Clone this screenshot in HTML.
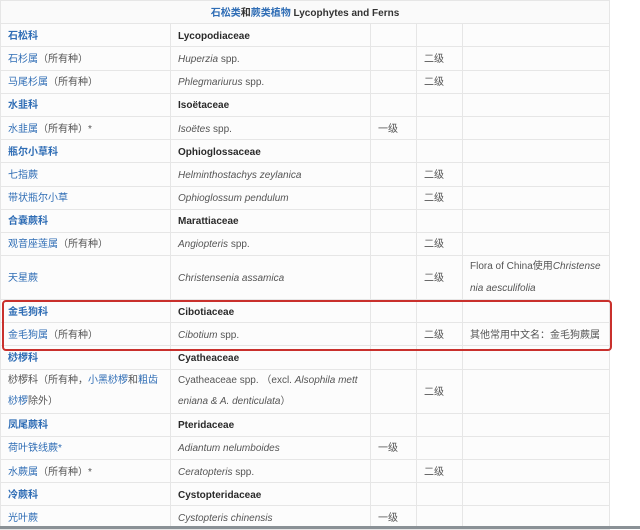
<!DOCTYPE html>
<html><head><meta charset="utf-8"><style>
body{margin:0;width:640px;height:529px;overflow:hidden;background:#fff;font-family:"Liberation Sans","Noto Sans CJK SC",sans-serif;font-size:10px;color:#333;position:relative}
table{position:absolute;left:0;top:0;border-collapse:collapse;width:609px;table-layout:fixed}
td{border:1px solid #e6e6e6;padding:3px 7px 0;height:19.2px;line-height:14px;vertical-align:middle;white-space:nowrap;overflow:hidden;background:#fcfcfc}
td.h{text-align:center;font-weight:bold;background:#fafafa}
.b{color:#2f6db5}.f{font-weight:bold;color:#2a2a2a}
.f.b{color:#2f6db5}
i{color:#555}
.g{color:#555}
.w{white-space:normal;line-height:21.5px;padding-top:0}
.box{position:absolute;left:2px;top:300px;width:606px;height:47px;border:2px solid #c9302c;border-radius:4px}
.bot{position:absolute;left:0;top:526px;width:640px;height:3px;background:#8a9196}
</style></head><body>
<table>
<colgroup><col style="width:170px"><col style="width:200px"><col style="width:46px"><col style="width:46px"><col style="width:147px"></colgroup>
<tr><td class="h" colspan="5"><span class="b">石松类</span>和<span class="b">蕨类植物</span> Lycophytes and Ferns</td></tr>
<tr><td class="f b">石松科</td><td class="f">Lycopodiaceae</td><td></td><td></td><td></td></tr>
<tr><td><span class="b">石杉属</span><span class="g">（所有种）</span></td><td><i>Huperzia</i> <span class="g">spp.</span></td><td></td><td class="g">二级</td><td></td></tr>
<tr><td><span class="b">马尾杉属</span><span class="g">（所有种）</span></td><td><i>Phlegmariurus</i> <span class="g">spp.</span></td><td></td><td class="g">二级</td><td></td></tr>
<tr><td class="f b">水韭科</td><td class="f">Isoëtaceae</td><td></td><td></td><td></td></tr>
<tr><td><span class="b">水韭属</span><span class="g">（所有种）*</span></td><td><i>Isoëtes</i> <span class="g">spp.</span></td><td class="g">一级</td><td></td><td></td></tr>
<tr><td class="f b">瓶尔小草科</td><td class="f">Ophioglossaceae</td><td></td><td></td><td></td></tr>
<tr><td class="b">七指蕨</td><td><i>Helminthostachys zeylanica</i></td><td></td><td class="g">二级</td><td></td></tr>
<tr><td class="b">带状瓶尔小草</td><td><i>Ophioglossum pendulum</i></td><td></td><td class="g">二级</td><td></td></tr>
<tr><td class="f b">合囊蕨科</td><td class="f">Marattiaceae</td><td></td><td></td><td></td></tr>
<tr><td><span class="b">观音座莲属</span><span class="g">（所有种）</span></td><td><i>Angiopteris</i> <span class="g">spp.</span></td><td></td><td class="g">二级</td><td></td></tr>
<tr><td class="b" style="height:40px">天星蕨</td><td><i>Christensenia assamica</i></td><td></td><td class="g">二级</td><td class="g w" style="word-break:break-all">Flora of China使用<i>Christensenia aesculifolia</i></td></tr>
<tr><td class="f b">金毛狗科</td><td class="f">Cibotiaceae</td><td></td><td></td><td></td></tr>
<tr><td><span class="b">金毛狗属</span><span class="g">（所有种）</span></td><td><i>Cibotium</i> <span class="g">spp.</span></td><td></td><td class="g">二级</td><td class="g">其他常用中文名：金毛狗蕨属</td></tr>
<tr><td class="f b">桫椤科</td><td class="f">Cyatheaceae</td><td></td><td></td><td></td></tr>
<tr><td class="g w" style="height:43px">桫椤科（所有种，<span class="b">小黑桫椤</span>和<span class="b">粗齿桫椤</span>除外）</td><td class="g w" style="word-break:break-all">Cyatheaceae spp. （excl. <i>Alsophila metteniana &amp; A. denticulata</i>）</td><td></td><td class="g">二级</td><td></td></tr>
<tr><td class="f b">凤尾蕨科</td><td class="f">Pteridaceae</td><td></td><td></td><td></td></tr>
<tr><td class="b">荷叶铁线蕨*</td><td><i>Adiantum nelumboides</i></td><td class="g">一级</td><td></td><td></td></tr>
<tr><td><span class="b">水蕨属</span><span class="g">（所有种）*</span></td><td><i>Ceratopteris</i> <span class="g">spp.</span></td><td></td><td class="g">二级</td><td></td></tr>
<tr><td class="f b">冷蕨科</td><td class="f">Cystopteridaceae</td><td></td><td></td><td></td></tr>
<tr><td class="b">光叶蕨</td><td><i>Cystopteris chinensis</i></td><td class="g">一级</td><td></td><td></td></tr>
</table>
<div class="box"></div>
<div class="bot"></div>
</body></html>
